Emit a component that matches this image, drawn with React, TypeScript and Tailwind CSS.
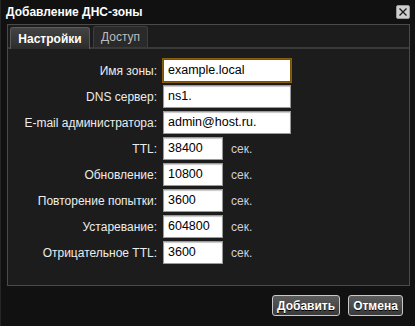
import React from "react";

const font = { fontFamily: '"Liberation Sans", Arial, sans-serif' };

function Field({ label, value, small, focused, suffix }: { label: string; value: string; small?: boolean; focused?: boolean; suffix?: boolean }) {
  return (
    <>
      <div className="h-[23px] flex items-center justify-end text-[12px] text-[#ececec] whitespace-nowrap">{label}</div>
      <div className="h-[23px] flex items-center">
        <div
          className={`${small ? "w-[60px]" : "w-[128px]"} h-[23px] bg-white flex items-center pl-[4px] text-[12.5px] text-black ${
            focused ? "border border-[#7a5200] outline outline-1 outline-[#8a6010]" : "border border-[#9a9a9a] shadow-[inset_0_1px_1px_#c8c8c8]"
          }`}
        >
          {value}
        </div>
        {suffix && <span className="ml-[8px] text-[12px] text-[#d0d0d0]">сек.</span>}
      </div>
    </>
  );
}

export default function App() {
  return (
    <div style={font} className="w-[415px] h-[326px] bg-[#111111] border-l border-[#262626] flex flex-col overflow-hidden">
      <div className="h-[24px] flex items-center justify-between pl-[5px] pr-[5px]">
        <span className="text-[12px] font-bold text-white">Добавление ДНС-зоны</span>
        <div className="w-[14px] h-[14px] bg-[#cfcfcf] border border-[#9a9a9a] rounded-[2px] flex items-center justify-center">
          <svg width="10" height="10" viewBox="0 0 10 10">
            <path d="M1.5 1.5 L8.5 8.5 M8.5 1.5 L1.5 8.5" stroke="#1a1a1a" strokeWidth="1.3" />
          </svg>
        </div>
      </div>
      <div className="ml-[6px] mr-[5px] h-[262px] border border-[#4a4a4a] bg-[#1c1c1c] flex flex-col">
        <div className="h-[24px] flex items-end pl-[2px] gap-[3px] border-b-[2px] border-[#3a3a3a]">
          <div className="h-[22px] w-[80px] rounded-t-[3px] border border-b-0 border-[#5a5a5a] bg-gradient-to-b from-[#444444] to-[#2c2c2c] flex items-center justify-center text-[12px] font-bold text-white -mb-[2px]">
            Настройки
          </div>
          <div className="h-[21px] w-[55px] rounded-t-[3px] border border-b-0 border-[#3e3e3e] bg-[#2a2a2a] flex items-center justify-center text-[12px] text-[#bdbdbd]">
            Доступ
          </div>
        </div>
        <div className="grid grid-cols-[149px_auto] gap-x-[6px] gap-y-[3px] pt-[10px]">
          <Field label="Имя зоны:" value="example.local" focused />
          <Field label="DNS сервер:" value="ns1." />
          <Field label="E-mail администратора:" value="admin@host.ru." />
          <Field label="TTL:" value="38400" small suffix />
          <Field label="Обновление:" value="10800" small suffix />
          <Field label="Повторение попытки:" value="3600" small suffix />
          <Field label="Устаревание:" value="604800" small suffix />
          <Field label="Отрицательное TTL:" value="3600" small suffix />
        </div>
      </div>
      <div className="flex justify-end gap-[8px] mt-[9px] pr-[12px]">
        <div className="h-[21px] w-[68px] rounded-[3px] border border-[#c8c8c8] bg-gradient-to-b from-[#5c5c5c] to-[#3a3a3a] flex items-center justify-center text-[12px] font-bold text-white [text-shadow:0_1px_0_#000]">
          Добавить
        </div>
        <div className="h-[21px] w-[55px] rounded-[3px] border border-[#c8c8c8] bg-gradient-to-b from-[#5c5c5c] to-[#3a3a3a] flex items-center justify-center text-[12px] font-bold text-white [text-shadow:0_1px_0_#000]">
          Отмена
        </div>
      </div>
    </div>
  );
}
